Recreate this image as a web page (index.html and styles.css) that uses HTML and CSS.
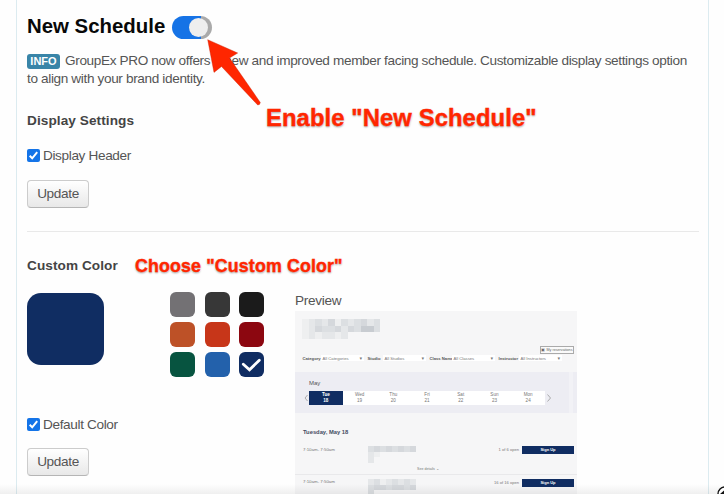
FILE: index.html
```html
<!DOCTYPE html>
<html lang="en">
<head>
<meta charset="utf-8">
<title>New Schedule</title>
<link rel="stylesheet" href="styles.css">
</head>
<body>
<main class="panel">
  <header class="title-row"><h1>New Schedule</h1><span class="toggle"><span class="knob"></span></span></header>
  <p class="intro"><span class="info">INFO</span><span class="line-one">GroupEx PRO now offers a new and improved member facing schedule. Customizable display settings option</span><br><span class="line-two">to align with your brand identity.</span></p>
  <h2 class="display-title">Display Settings</h2>
  <div class="check-row"><span class="checkbox"><svg viewBox="0 0 13 13"><path d="M2.7 6.8 5.2 9.3 10.2 3.2"/></svg></span>Display Header</div>
  <button class="update">Update</button>
  <hr>
  <div class="custom-title"><h2>Custom Color</h2><span class="note small">Choose "Custom Color"</span></div>
  <section class="colors">
    <div class="current">
      <div class="swatch"></div>
      <div class="check-row default"><span class="checkbox"><svg viewBox="0 0 13 13"><path d="M2.7 6.8 5.2 9.3 10.2 3.2"/></svg></span>Default Color</div>
      <button class="update">Update</button>
    </div>
    <div class="palette">
      <i class="gray"></i><i class="charcoal"></i><i class="black"></i>
      <i class="orange"></i><i class="red"></i><i class="maroon"></i>
      <i class="green"></i><i class="blue"></i><i class="navy"><svg viewBox="0 0 25 25"><path d="M4.3 12.2 10.5 17.8 20.3 8.2"/></svg></i>
    </div>
    <div class="preview-column">
      <div class="preview-label">Preview</div>
      <div class="preview">
        <div class="brand">
          <b class="m1"></b><b class="m2"></b><b class="m3"></b><b class="m2"></b><b class="m4"></b><b class="m1"></b><b class="m3"></b><b class="m2"></b><b class="m3"></b><b class="m4"></b><b class="m2"></b><b class="m3"></b>
          <b class="m1"></b><b class="m2"></b><b class="m4"></b><b class="m3"></b><b class="m3"></b><b class="m4"></b><b class="m2"></b><b class="m4"></b><b class="m3"></b><b class="m5"></b><b class="m5"></b><b class="m3"></b>
          <b class="m1"></b><b class="m2"></b><b class="m1"></b><b class="m2"></b><b class="m2"></b><b class="m1"></b><b class="m2"></b>
        </div>
        <div class="reservation"><span>▣ My reservations</span></div>
        <div class="filters">
          <label>Category</label><span class="select">All Categories<em>▼</em></span>
          <label>Studio</label><span class="select">All Studios<em>▼</em></span>
          <label>Class Name</label><span class="select">All Classes<em>▼</em></span>
          <label>Instructor</label><span class="select">All Instructors<em>▼</em></span>
        </div>
        <div class="calendar">
          <div class="month">May</div>
          <div class="week">
            <svg class="chevron" viewBox="0 0 6 10"><path d="M4.5 2 2 5 4.5 8"/></svg>
            <div class="days"><span class="active">Tue<br>18</span><span>Wed<br>19</span><span>Thu<br>20</span><span>Fri<br>21</span><span>Sat<br>22</span><span>Sun<br>23</span><span>Mon<br>24</span></div>
            <svg class="chevron" viewBox="0 0 6 10"><path d="M1.5 1.5 4.5 5 1.5 8.5"/></svg>
          </div>
        </div>
        <div class="date">Tuesday, May 18</div>
        <div class="event first">
          <span class="time">7:10am- 7:50am</span>
          <div class="masked"><b class="m3"></b><b class="m4"></b><b class="m3"></b><b class="m4"></b><b class="m3"></b><b class="m4"></b><b class="m3"></b><b class="m4"></b><b class="m2"></b><b class="m1"></b><b class="wide"></b></div>
          <span class="spots">1 of 6 open</span><span class="signup">Sign Up</span>
          <span class="more">See details ⌄</span>
        </div>
        <div class="event">
          <span class="time">7:10am- 7:50am</span>
          <div class="masked"><b class="m2"></b><b class="m3"></b><b class="m1"></b><b class="m2"></b><b class="m3"></b><b class="m2"></b><b class="m3"></b><b class="m2"></b><b class="m3"></b><b class="m4"></b><b class="m4"></b><b class="m3"></b><b class="m4"></b><b class="m4"></b><b class="m3"></b><b class="m4"></b><b class="m3"></b></div>
          <span class="spots">16 of 16 open</span><span class="signup">Sign Up</span>
        </div>
      </div>
    </div>
  </section>
</main>
<svg class="arrow" viewBox="0 0 60 72"><path d="M2.7 2.7 32.7 16 24.5 21 55.3 65.5Q55 68 52.7 68L16.5 29.5 9 35.4Z"/></svg>
<span class="note large">Enable "New Schedule"</span>
<div class="fade"></div>
<svg class="corner" viewBox="0 0 12 12"><circle cx="8" cy="8" r="7"/><path d="M3 8 7 4.5 12 3.5V12H5L6 8Z"/></svg>
</body>
</html>
```
FILE: styles.css
```css
* { box-sizing: border-box; }
body { margin: 0; width: 724px; height: 494px; overflow: hidden; position: relative; background: #fefefe; color: #555; font: 13.6px/18px "Liberation Sans", Arial, sans-serif; letter-spacing: -.36px; }
.panel { width: 693px; height: 494px; margin-left: 16px; padding: 12px 9px 0 10px; border: 1px solid #dcebf0; border-width: 0 1px; overflow: hidden; }
.title-row { display: flex; align-items: center; height: 30px; }
h1 { margin: 0; color: #080808; font-size: 20.4px; line-height: 26px; padding-bottom: 2px; letter-spacing: 0; width: 144.5px; white-space: nowrap; }
.toggle { width: 40px; height: 23px; border-radius: 12px; margin-top: 1px; background: linear-gradient(90deg, #1673e6 0 29px, #aaa 29px); display: flex; padding: 2px 3px 2px 17px; }
.knob { width: 19px; height: 19px; border-radius: 50%; background: #eee; }
.intro { margin: 10px 0 0; height: 36px; white-space: nowrap; }
.info { display: inline-block; width: 33px; height: 15px; margin-right: 5px; border-radius: 3px; background: #3985a8; color: #fff; text-align: center; font-weight: bold; font-size: 11px; line-height: 15px; letter-spacing: 0; }
h2 { margin: 0; color: #444; font-size: 13.6px; line-height: 18px; letter-spacing: .08px; white-space: nowrap; }
.display-title { margin-top: 24px; }
.check-row { display: flex; align-items: center; height: 18px; margin-top: 17px; }
.checkbox { width: 13px; height: 13px; border-radius: 2px; margin: -2px 3px 0 0; background: #1474e8; display: flex; }
.checkbox path { fill: none; stroke: #fff; stroke-width: 2; }
.update { display: block; width: 62px; height: 28px; margin: 15px 0 0; padding: 0; border: 1px solid #ccc; border-bottom-color: #b5b5b5; border-radius: 4px; background: linear-gradient(#fff, #e8e8e8); color: #555; font: inherit; letter-spacing: -.36px; }
hr { height: 1px; border: 0; background: #e9e9e9; margin: 23px 0 0; }
.custom-title { display: flex; height: 18px; margin-top: 25px; }
.custom-title h2 { width: 108px; }
.note { color: #ff2600; font-weight: bold; text-shadow: 0 0 2px #fff, 0 1px 2px #888; white-space: nowrap; -webkit-text-stroke: .4px #ff2600; }
.small { font-size: 17.8px; line-height: 19px; letter-spacing: .15px; }
.large { position: absolute; left: 266px; top: 104px; font-size: 23.8px; line-height: 28px; letter-spacing: .1px; }
.colors { display: flex; margin-top: 17px; }
.current { width: 143px; }
.swatch { width: 77px; height: 72px; border-radius: 14px; background: #102d62; margin-top: 1px; }
.default { margin-top: 51px; }
.current .update { margin-top: 14px; }
.palette { width: 125px; display: grid; grid-template-columns: repeat(3, 25px); grid-auto-rows: 25px; gap: 5px 9.7px; align-content: start; }
.palette i { border-radius: 6px; display: flex; }
.palette path { fill: none; stroke: #fff; stroke-width: 2.8; stroke-linecap: round; }
.gray { background: #737174; } .charcoal { background: #373737; } .black { background: #1b1b1b; }
.orange { background: #bd5127; } .red { background: #c73619; } .maroon { background: #8c0710; }
.green { background: #075440; } .blue { background: #2361ab; } .navy { background: #102d62; }
.preview-label { height: 19px; font-size: 13.6px; letter-spacing: -.3px; }
.preview { width: 282px; height: 184px; background: #f6f6f7; overflow: hidden; font-size: 4.3px; line-height: 5px; letter-spacing: 0; color: #777; }
.brand { width: 78px; height: 20px; margin: 8px 0 0 7px; display: grid; grid-template-columns: repeat(12, 6.5px); grid-auto-rows: 6.5px; }
.m1 { background: #eeeff0; } .m2 { background: #e5e7e9; } .m3 { background: #dcdfe2; } .m4 { background: #d5d8dc; } .m5 { background: #c8ccd1; }
.reservation { display: flex; justify-content: center; align-items: center; width: 34px; height: 8px; margin: 7px 0 0 245px; border: 1px solid #aaa; background: #fafafa; font-size: 3.7px; color: #666; }
.filters { display: flex; margin: 1px 0 0 7.5px; height: 7px; line-height: 7px; font-size: 4.2px; white-space: nowrap; }
.filters label { color: #555; font-weight: bold; width: 18px; }
.select { display: flex; justify-content: space-between; width: 43.5px; height: 6px; padding: 0 1px 0 2px; background: #fff; margin-right: 3.5px; }
.filters label:nth-of-type(2) { width: 15px; }
.filters label:nth-of-type(3) { width: 22px; }
.filters label:nth-of-type(4) { width: 20px; }
.filters em { font-style: normal; }
.calendar { height: 41px; margin-top: 10px; padding-top: 8px; background: linear-gradient(90deg, #ededf3 0 274px, #f2f2f6 274px 278px, #ededf3 278px); }
.month { margin-left: 14px; font-size: 6px; line-height: 7px; color: #555; height: 11px; }
.week { display: flex; padding-left: 8px; }
.chevron { width: 6px; height: 14px; }
.chevron path { fill: none; stroke: #999; stroke-width: .8; }
.days { width: 236px; height: 14px; display: flex; background: #fff; margin-right: 1px; }
.days span { flex: 1; text-align: center; font-size: 4.6px; line-height: 6px; padding-top: 1px; }
.days .active { background: #102d62; color: #fff; font-weight: bold; }
.date { margin: 15px 0 0 8px; height: 8px; font-size: 5.8px; line-height: 8px; font-weight: bold; color: #444b62; white-space: nowrap; }
.event { display: grid; grid-template-columns: 65px 120px 34px 52px; height: 33px; padding: 4px 0 0 8px; white-space: nowrap; align-items: start; }
.first { margin-top: 6px; height: 33px; border-bottom: 1px solid #e9e9eb; }
.time { font-size: 4.4px; }
.masked { display: grid; grid-template-columns: repeat(8, 6px); grid-auto-rows: 5.5px; }
.masked .wide { grid-column: 1; background: #e5e7e9; }
.spots { text-align: right; padding-right: 3px; font-size: 4.1px; }
.signup { height: 8px; background: #102d62; color: #fff; text-align: center; font-size: 4px; line-height: 8px; font-weight: bold; }
.first .masked { height: 17px; }
.first .time, .event .spots { padding-top: 1px; }
.more { grid-column: 1 / 4; margin: 2px 0 0 114px; font-size: 3.6px; }
.arrow { position: absolute; left: 205px; top: 37px; width: 60px; height: 72px; }
.arrow path { fill: #ff2600; stroke: #c91e00; stroke-width: .4; }
.fade { position: absolute; left: 0; right: 0; bottom: 0; height: 10px; background: linear-gradient(transparent, #0000000f); }
.corner { position: absolute; left: 717px; top: 486px; width: 12px; height: 12px; }
.corner circle { fill: #fff; stroke: #111; stroke-width: 1.4; }
.corner path { fill: #111; }
```
